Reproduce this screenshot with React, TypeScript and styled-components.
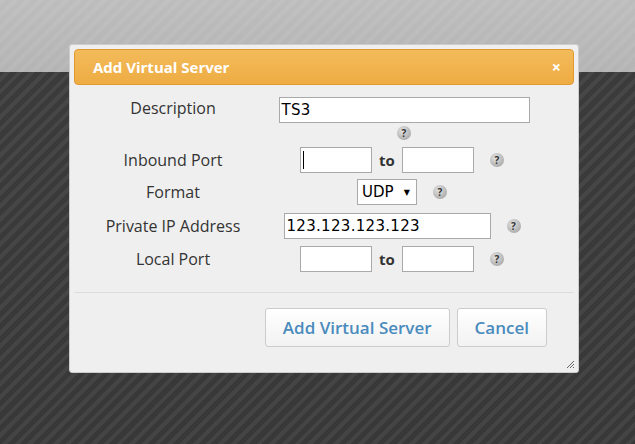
import React from "react";
import styled, { createGlobalStyle } from "styled-components";

const Global = createGlobalStyle`
  html, body { margin: 0; height: 100%; }
  body {
    font-family: "Open Sans", "DejaVu Sans", sans-serif;
    background:
      repeating-linear-gradient(135deg, rgba(255,255,255,0.06) 0 4px, transparent 4px 9px),
      linear-gradient(#bdbdbd 0, #b4b4b4 72px, #3b3b3b 72px, #383838 100%);
    overflow: hidden;
  }
`;

const Page = styled.div`
  width: 635px; height: 444px; padding-top: 44px; box-sizing: border-box;
`;
const Dialog = styled.div`
  margin-left: 69px; width: 510px; height: 329px; box-sizing: border-box;
  background: #efefef; border: 1px solid #ccc; border-radius: 3px;
  padding: 4px; position: relative; display: flex; flex-direction: column;
`;
const Title = styled.div`
  height: 36px; box-sizing: border-box; border: 1px solid #e09a30; border-radius: 4px;
  background: linear-gradient(#f3bb5a, #eeac43);
  color: #fff; font-weight: bold; font-size: 15px;
  display: flex; align-items: center; justify-content: space-between; padding: 0 12px 0 18px;
`;
const Close = styled.span` font-size: 16px; font-weight: bold; `;
const Form = styled.div`
  display: grid; grid-template-columns: 198px 260px; align-content: start;
  height: 201px; padding-top: 6px; box-sizing: content-box;
  border-bottom: 1px solid #dcdcdc;
`;
const Label = styled.div<{ h: number }>`
  height: ${p => p.h}px; display: flex; align-items: ${p => p.h > 40 ? "flex-start" : "center"};
  justify-content: center; font-size: 16px; color: #333;
  padding-top: ${p => p.h > 40 ? 6 : 0}px; box-sizing: border-box;
`;
const Cell = styled.div<{ h: number; col?: boolean }>`
  height: ${p => p.h}px; display: flex; flex-direction: ${p => p.col ? "column" : "row"};
  align-items: center; justify-content: center; gap: 6px;
`;
const Input = styled.div<{ w: number }>`
  width: ${p => p.w}px; height: 26px; box-sizing: border-box; background: #fff;
  border: 1px solid #a9a9a9; font-size: 15px; color: #000; padding-left: 2px;
  display: flex; align-items: center; font-family: "DejaVu Sans", sans-serif; letter-spacing: 0.3px;
`;
const To = styled.span` font-weight: bold; font-size: 15px; color: #333; margin: 0 1px; `;
const Help = styled.span`
  width: 14px; height: 14px; border-radius: 50%; margin-left: 10px;
  background: radial-gradient(circle at 40% 35%, #e4e4e4, #999);
  color: #333; font-size: 10px; font-weight: bold;
  display: inline-flex; align-items: center; justify-content: center;
`;
const Select = styled.div`
  width: 60px; height: 26px; box-sizing: border-box; background: #fff; border: 1px solid #a9a9a9;
  font-size: 15px; display: flex; align-items: center; justify-content: space-between; padding: 0 6px 0 4px;
  font-family: "DejaVu Sans", sans-serif;
`;
const Caret = styled.span` font-size: 8px; `;
const Buttons = styled.div`
  display: flex; justify-content: flex-end; gap: 7px; padding: 15px 27px 0 0;
`;
const Button = styled.div`
  height: 39px; box-sizing: border-box; border: 1px solid #ccc; border-radius: 3px;
  background: linear-gradient(#fff, #f2f2f2); color: #4a8bbd; font-size: 17px; font-weight: 600;
  display: flex; align-items: center; padding: 0 17px;
`;
const Grip = styled.svg` position: absolute; right: 3px; bottom: 3px; `;
const Caretbar = styled.span` width: 1px; height: 18px; background: #000; `;

export default function App() {
  return (
    <Page>
      <Global />
      <Dialog>
        <Title>Add Virtual Server<Close>×</Close></Title>
        <Form>
          <Label h={54}>Description</Label>
          <Cell h={54} col style={{ gap: 3 }}>
            <Input w={251} style={{ marginLeft: 4 }}>TS3</Input>
            <Help style={{ marginLeft: 4 }}>?</Help>
          </Cell>
          <Label h={30}>Inbound Port</Label>
          <Cell h={30}><Input w={72}><Caretbar /></Input><To>to</To><Input w={72} /><Help>?</Help></Cell>
          <Label h={34}>Format</Label>
          <Cell h={34}><Select>UDP<Caret>▼</Caret></Select><Help>?</Help></Cell>
          <Label h={33}>Private IP Address</Label>
          <Cell h={33}><Input w={207}>123.123.123.123</Input><Help>?</Help></Cell>
          <Label h={34}>Local Port</Label>
          <Cell h={34}><Input w={72} /><To>to</To><Input w={72} /><Help>?</Help></Cell>
        </Form>
        <Buttons>
          <Button>Add Virtual Server</Button>
          <Button>Cancel</Button>
        </Buttons>
        <Grip width="10" height="10" viewBox="0 0 10 10">
          <path d="M9 2L2 9M9 5L5 9M9 8L8 9" stroke="#666" strokeWidth="1" />
        </Grip>
      </Dialog>
    </Page>
  );
}
